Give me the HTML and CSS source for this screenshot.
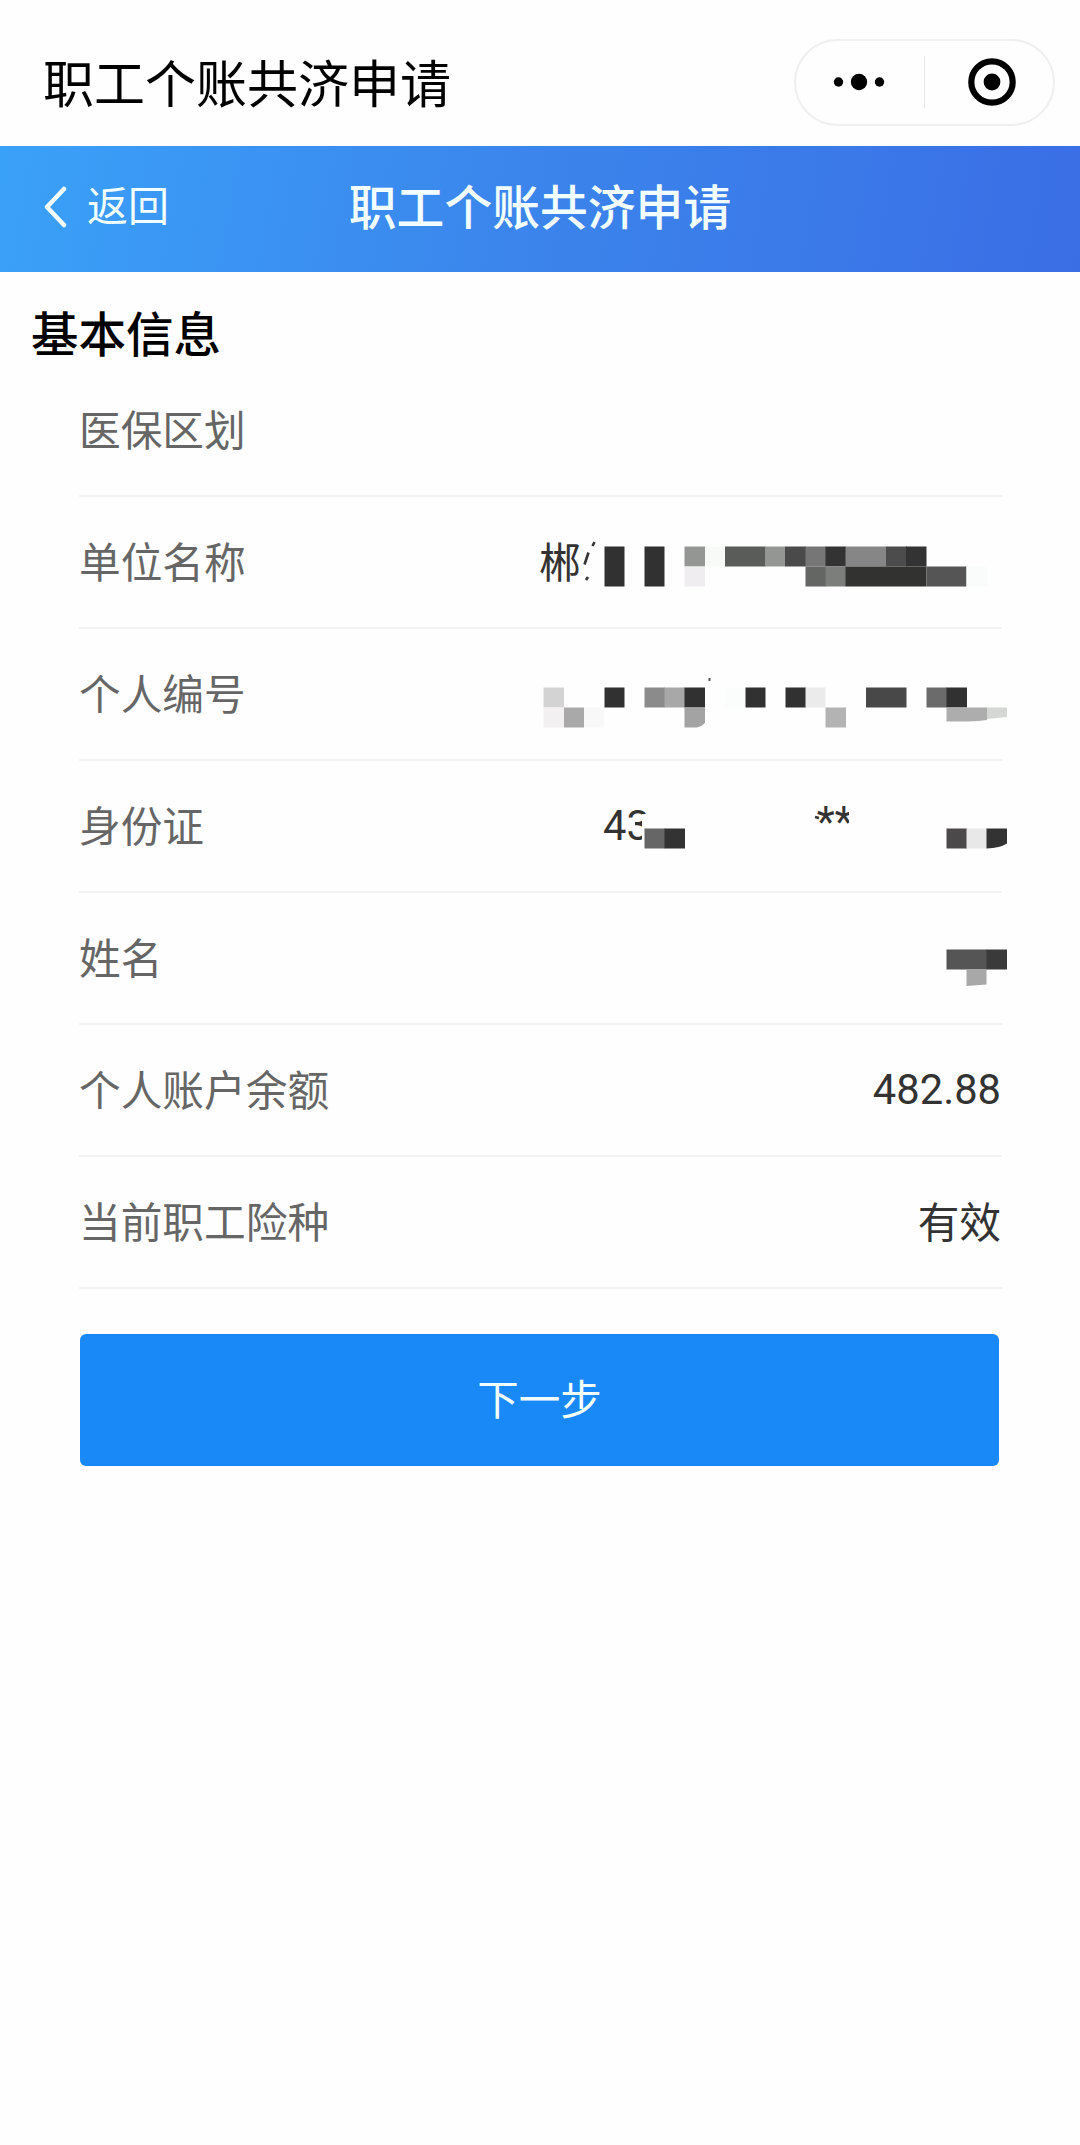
FILE: index.html
```html
<!DOCTYPE html>
<html lang="zh-CN">
<head>
    <meta charset="UTF-8">
    <meta name="viewport" content="width=device-width, initial-scale=1.0">
    <title>职工个账共济申请</title>
    <link rel="stylesheet" href="styles.css">
</head>
<body>
    <div class="app-bar">
        <div class="app-title">职工个账共济申请</div>
        <div class="capsule">
            <svg class="capsule-dots" width="52" height="20" viewBox="0 0 52 20">
                <circle cx="5.5" cy="10" r="4.7"/>
                <circle cx="26" cy="10" r="8.2"/>
                <circle cx="46.5" cy="10" r="4.7"/>
            </svg>
            <div class="capsule-line"></div>
            <svg class="capsule-close" width="48" height="48" viewBox="0 0 48 48">
                <circle cx="24" cy="24" r="20.7" fill="none" stroke="#000" stroke-width="6.2"/>
                <circle cx="24" cy="24" r="8.4"/>
            </svg>
        </div>
    </div>

    <div class="nav">
        <div class="back">
            <svg width="24" height="42" viewBox="0 0 24 42">
                <path d="M20 3 L3 21 L20 39" fill="none" stroke="#f2fdff" stroke-width="4.5" stroke-linecap="round" stroke-linejoin="round"/>
            </svg>
            <span>返回</span>
        </div>
        <div class="nav-title">职工个账共济申请</div>
    </div>

    <div class="section-title">基本信息</div>

    <div class="form">
        <div class="row">
            <div class="label">医保区划</div>
        </div>
        <div class="row">
            <div class="label">单位名称</div>
            <div class="value masked">郴</div>
            <svg class="mosaic" viewBox="79 497 930 132">
                <path d="M594.5 542l-2 4M588.5 552.5l-4 12M588 577l-2 3" fill="none" stroke="#333" stroke-width="2.6"/>
                <rect x="604.5" y="546.5" width="20" height="40" fill="#313131"/>
                <rect x="644.5" y="546.5" width="20" height="40" fill="#313131"/>
                <rect x="684.5" y="546.5" width="20.5" height="20" fill="#939693"/>
                <rect x="684.5" y="566.5" width="20.5" height="20" fill="#efedef"/>
                <rect x="705" y="546.5" width="20" height="20" fill="#f8faf8"/>
                <rect x="725" y="546.5" width="40.5" height="20" fill="#5a5c59"/>
                <rect x="765" y="546.5" width="20.5" height="20" fill="#949694"/>
                <rect x="785" y="546.5" width="21" height="20" fill="#4a4a4a"/>
                <rect x="805.5" y="546.5" width="20.5" height="20" fill="#767676"/>
                <rect x="825.5" y="546.5" width="20.5" height="20" fill="#333"/>
                <rect x="845.5" y="546.5" width="41" height="20" fill="#868686"/>
                <rect x="886" y="546.5" width="21" height="20" fill="#4c4c4c"/>
                <rect x="906" y="546.5" width="20.5" height="20" fill="#333"/>
                <rect x="805.5" y="566.5" width="20.5" height="20" fill="#646664"/>
                <rect x="825.5" y="566.5" width="20.5" height="20" fill="#7c7e7c"/>
                <rect x="845.5" y="566.5" width="81" height="20" fill="#323230"/>
                <rect x="926.5" y="566.5" width="40" height="20" fill="#555"/>
                <rect x="966.5" y="566.5" width="21" height="20" fill="#f9fcfb"/>
            </svg>
        </div>
        <div class="row">
            <div class="label">个人编号</div>
            <svg class="mosaic" viewBox="79 629 930 132">
                <rect x="543.5" y="687.5" width="20.5" height="20" fill="#d3d3d3"/>
                <rect x="543.5" y="707.5" width="20.5" height="20" fill="#f3f0f1"/>
                <rect x="564" y="707.5" width="20" height="20" fill="#a9a9a9"/>
                <rect x="584" y="707.5" width="20" height="20" fill="#f8f8f8"/>
                <rect x="604.5" y="687.5" width="20" height="20" fill="#313131"/>
                <rect x="644.5" y="687.5" width="20.5" height="20" fill="#8b8b8b"/>
                <rect x="664.5" y="687.5" width="20.5" height="20" fill="#a8a8a8"/>
                <rect x="684.5" y="687.5" width="20.5" height="20" fill="#313131"/>
                <path d="M684.5 707.5h20.5v15q-3 4-8 5h-12.5z" fill="#a3a3a3"/>
                <rect x="708.5" y="678" width="2" height="3" fill="#555"/>
                <rect x="725" y="687.5" width="20" height="20" fill="#fafdfc"/>
                <rect x="745.5" y="687.5" width="20" height="20" fill="#313131"/>
                <rect x="785.5" y="687.5" width="20.5" height="20" fill="#313131"/>
                <rect x="805.5" y="687.5" width="20" height="20" fill="#ebebeb"/>
                <rect x="825.5" y="707.5" width="20.5" height="20" fill="#b3b3b3"/>
                <rect x="866" y="687.5" width="40.5" height="20" fill="#484848"/>
                <rect x="926.5" y="687.5" width="20.5" height="20" fill="#6b6b6b"/>
                <rect x="946.5" y="687.5" width="20.5" height="20" fill="#313131"/>
                <path d="M946.5 707.5h40.5v12.5q-14 2-40.5 1.5z" fill="#adadad"/>
                <path d="M987 707.5h20v9.5l-20 2z" fill="#d5d7d5"/>
            </svg>
        </div>
        <div class="row">
            <div class="label">身份证</div>
            <div class="value masked id-card">
                <span>43</span>
                <span class="stars">**</span>
            </div>
            <svg class="mosaic" viewBox="79 761 930 132">
                <path d="M642 814h10v32h-10zM629 818h6v13h-6zM849 806h12v28h-12z" fill="#fefefe"/>
                <path d="M815 817l4 1" stroke="#333" stroke-width="2.5"/>
                <rect x="644.5" y="828.5" width="20.5" height="20" fill="#666"/>
                <rect x="664.5" y="828.5" width="20.5" height="20" fill="#333"/>
                <rect x="946.5" y="828.5" width="20.5" height="20" fill="#4c494b"/>
                <rect x="966.5" y="828.5" width="20.5" height="20" fill="#e8e8e8"/>
                <path d="M986.5 828.5h20.5v15q-7 4.5-20.5 5z" fill="#333"/>
            </svg>
        </div>
        <div class="row">
            <div class="label">姓名</div>
            <svg class="mosaic" viewBox="79 893 930 132">
                <rect x="946.5" y="949.5" width="40.5" height="20" fill="#555"/>
                <rect x="986.5" y="949.5" width="20.5" height="20" fill="#3a3a3a"/>
                <path d="M966.5 969.5h20v15l-20 1.5z" fill="#a8a8a8"/>
            </svg>
        </div>
        <div class="row">
            <div class="label">个人账户余额</div>
            <div class="value amount">482.88</div>
        </div>
        <div class="row">
            <div class="label">当前职工险种</div>
            <div class="value">有效</div>
        </div>
    </div>

    <button class="next-btn">下一步</button>
</body>
</html>
```
FILE: styles.css
```css
body {
    margin: 0;
    min-height: 2145px;
    background: #fefefe;
    font-family: Roboto, "Noto Sans CJK SC", sans-serif;
    color: #000;
}

.app-bar {
    display: flex;
    align-items: center;
    justify-content: space-between;
    box-sizing: border-box;
    height: 146px;
    padding: 18px 25px 0 43px;
}

.app-title {
    padding-top: 7px;
    font-size: 51px;
    line-height: 60px;
}

.capsule {
    display: flex;
    align-items: center;
    box-sizing: border-box;
    width: 261px;
    height: 87px;
    border: 2px solid #efefef;
    border-radius: 44px;
}

.capsule-dots {
    margin-left: 37px;
}

.capsule-line {
    width: 1px;
    height: 52px;
    margin: 0 43px 0 39px;
    background: #e6e6e6;
}

.nav {
    display: grid;
    grid-template-columns: 1fr auto 1fr;
    align-items: center;
    height: 126px;
    background: linear-gradient(100deg, #3aa1f8 0%, #3b85ec 48%, #3a6ee5 100%);
    color: #f2fdff;
}

.back {
    display: flex;
    align-items: center;
    gap: 19px;
    padding: 0 0 5px 44px;
    font-size: 41px;
    line-height: 50px;
}

.nav-title {
    font-size: 47.8px;
    font-weight: 500;
    line-height: 60px;
}

.section-title {
    height: 93px;
    padding-left: 31px;
    font-size: 47.5px;
    font-weight: 500;
    line-height: 129px;
}

.form {
    margin: 0 78px 0 79px;
}

.row {
    position: relative;
    display: flex;
    align-items: center;
    justify-content: space-between;
    box-sizing: border-box;
    height: 132px;
    padding: 0 1px 5px 0;
    border-bottom: 2px solid #f3f3f3;
    font-size: 41.7px;
}

.label {
    color: #666;
}

.value {
    color: #333;
}

.amount {
    padding-top: 3px;
}

.masked {
    width: 462px;
}

.id-card {
    display: flex;
    box-sizing: border-box;
    padding: 3px 0 0 64px;
}

.stars {
    margin: -4px 0 0 167px;
}

/* covers the private part of a value */
.mosaic {
    position: absolute;
    top: 0;
    left: 0;
    width: 930px;
    height: 132px;
}

.next-btn {
    display: block;
    width: 919px;
    height: 132px;
    margin: 45px 0 0 80px;
    padding: 0 0 6px;
    border: 0;
    border-radius: 6px;
    background: #1a89f8;
    color: #f2fdff;
    font-family: inherit;
    font-size: 41.5px;
}
```
